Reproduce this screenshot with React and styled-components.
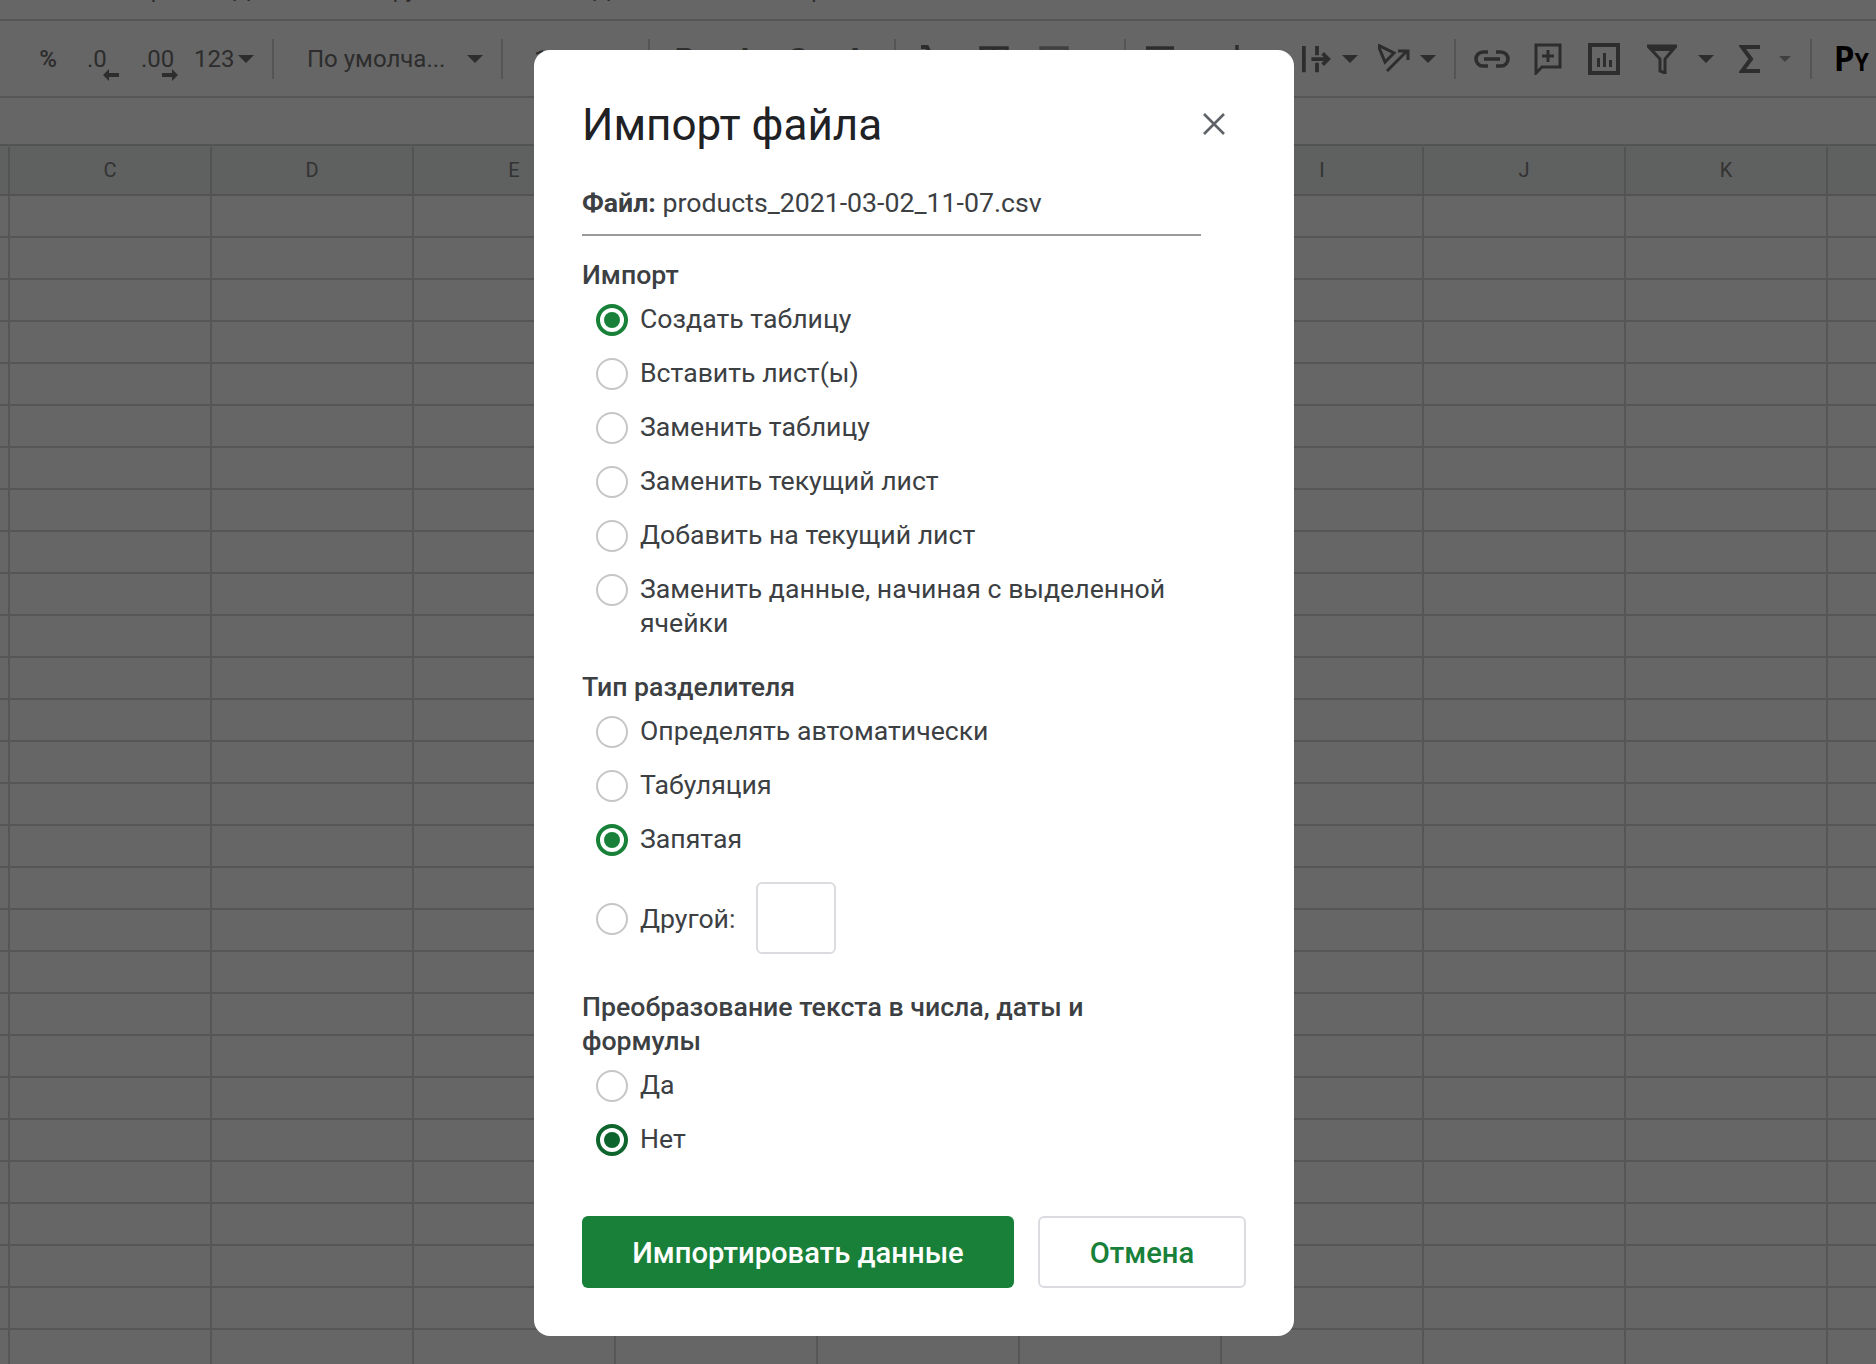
import React from 'react'
import styled, { createGlobalStyle } from 'styled-components'

const GlobalStyle = createGlobalStyle`
  html, body {
    margin: 0;
    padding: 0;
    width: 1876px;
    height: 1364px;
    overflow: hidden;
    background: #fff;
    font-family: Roboto, "Liberation Sans", sans-serif;
  }
`

const Page = styled.div`
  position: relative;
  width: 1876px;
  height: 1364px;
  overflow: hidden;
`

// menu row, only the descenders stick out at the top
const MenuBar = styled.div`
  display: flex;
  height: 19px;
  overflow: hidden;
  border-bottom: 2px solid #d8d8d8;
`

const MenuItem = styled.span`
  flex: none;
  width: ${p => p.$w}px;
  margin-top: -25px;
  height: 30px;
  line-height: 30px;
  font-size: 23px;
  color: #707070;
  white-space: nowrap;
`

const ToolBar = styled.div`
  display: flex;
  align-items: center;
  height: 75px;
  padding-left: 24px;
  border-bottom: 2px solid #d8d8d8;
  white-space: nowrap;
`

const Tool = styled.div`
  position: relative;
  flex: none;
  display: flex;
  align-items: center;
  justify-content: ${p => (p.$left ? 'flex-start' : 'center')};
  width: ${p => p.$w}px;
  height: 40px;
  padding-left: ${p => p.$pad || 0}px;
  box-sizing: border-box;
  font-size: ${p => p.$size || 24}px;
  font-weight: ${p => p.$weight || 400};
  color: #707070;
`

const Sep = styled.div`
  flex: none;
  width: 2px;
  height: 40px;
  background: #d4d4d4;
`

const Caret = styled.span`
  display: inline-block;
  flex: none;
  width: 0;
  height: 0;
  margin-left: ${p => p.$ml || 0}px;
  border-left: ${p => p.$s || 8}px solid transparent;
  border-right: ${p => p.$s || 8}px solid transparent;
  border-top: ${p => p.$s || 8}px solid ${p => (p.$dim ? '#a0a0a0' : '#707070')};
`

const NudgeArrow = styled.svg`
  position: absolute;
  top: 30px;
  left: ${p => p.$l}px;
`

const PyMark = styled.span`
  font-family: "DejaVu Sans Mono", monospace;
  font-weight: 700;
  font-size: 34px;
  color: #000;
  & > small {
    font-size: 24px;
  }
`

const FormulaBar = styled.div`
  height: 46px;
  border-bottom: 2px solid #d0d0d0;
`

const HeaderRow = styled.div`
  display: flex;
  height: 48px;
  background: #eef1f0;
  border-bottom: 2px solid #d0d0d0;
  align-items: flex-end;
`

const HeaderCell = styled.div`
  flex: none;
  width: ${p => p.$w}px;
  height: 47px;
  line-height: 46px;
  text-align: center;
  font-size: 20px;
  color: #808080;
  border-right: 2px solid #d0d0d0;
  box-sizing: border-box;
`

const Row = styled.div`
  display: flex;
  height: 40px;
  border-bottom: 2px solid #d8d8d8;
`

const Cell = styled.div`
  flex: none;
  width: ${p => p.$w}px;
  border-right: 2px solid #d8d8d8;
  box-sizing: border-box;
`

const Scrim = styled.div`
  position: absolute;
  inset: 0;
  display: flex;
  align-items: flex-start;
  padding: 50px 0 0 534px;
  background: rgba(0, 0, 0, 0.6);
`

const Dialog = styled.div`
  width: 760px;
  height: 1286px;
  padding: 0 48px 48px;
  box-sizing: border-box;
  background: #fff;
  border-radius: 16px;
  color: #3c4043;
`

const DialogHead = styled.div`
  display: flex;
  align-items: center;
  justify-content: space-between;
  height: 100px;
  padding-top: 50px;
  box-sizing: border-box;
`

const Title = styled.h1`
  margin: 0;
  font-size: 44px;
  line-height: 50px;
  font-weight: 400;
  color: #202124;
`

const CloseBtn = styled.button`
  display: flex;
  align-items: center;
  justify-content: center;
  width: 40px;
  height: 40px;
  margin: -2px 12px 0 0;
  padding: 0;
  border: 0;
  background: none;
  color: #5f6368;
`

const FileLine = styled.div`
  width: 619px;
  margin-top: 36px;
  padding-bottom: 14px;
  border-bottom: 2px solid #9a9a9a;
  font-size: 26.7px;
  line-height: 34px;
  & > b {
    font-weight: 700;
  }
`

const GroupLabel = styled.div`
  margin-top: ${p => p.$mt}px;
  margin-bottom: 1px;
  width: 570px;
  font-size: 26.7px;
  line-height: 34px;
  font-weight: 500;
`

const Option = styled.label`
  display: flex;
  align-items: flex-start;
  min-height: 54px;
  padding-left: 14px;
  font-size: 26.65px;
  line-height: 34px;
`

const Radio = styled.span`
  flex: none;
  display: flex;
  align-items: center;
  justify-content: center;
  width: 32px;
  height: 32px;
  margin-top: 11px;
  margin-right: 12px;
  box-sizing: border-box;
  border-radius: 50%;
  border: ${p => (p.$color ? `4px solid ${p.$color}` : '2px solid #c6c6c6')};
  &::after {
    content: '';
    display: ${p => (p.$color ? 'block' : 'none')};
    width: 16px;
    height: 16px;
    border-radius: 50%;
    background: ${p => p.$color};
  }
`

const OptionText = styled.span`
  width: 540px;
  padding-top: 9px;
  padding-bottom: 11px;
`

const OtherRow = styled.div`
  display: flex;
  align-items: center;
  height: 72px;
  margin-top: 15px;
  padding-left: 14px;
  font-size: 26.65px;
`

const OtherRadio = styled(Radio)`
  margin-top: 2px;
`

const OtherLabel = styled.span`
  margin-top: 2px;
`

const OtherInput = styled.div`
  width: 80px;
  height: 72px;
  margin-left: 21px;
  box-sizing: border-box;
  border: 2px solid #dadce0;
  border-radius: 6px;
`

const Actions = styled.div`
  display: flex;
  gap: 24px;
  margin-top: 49px;
`

const Button = styled.button`
  width: ${p => p.$w}px;
  height: 72px;
  padding: 2px 0 0;
  box-sizing: border-box;
  border-radius: 6px;
  border: ${p => (p.$primary ? '0' : '2px solid #dadce0')};
  background: ${p => (p.$primary ? '#188038' : '#fff')};
  color: ${p => (p.$primary ? '#fff' : '#188038')};
  font-family: Roboto, "Liberation Sans", sans-serif;
  font-size: 29.2px;
  font-weight: 500;
`

const GREEN = '#188038'
const DARK_GREEN = '#0d652d'
const INK = '#707070'

const importOptions = [
  ['Создать таблицу', GREEN],
  ['Вставить лист(ы)'],
  ['Заменить таблицу'],
  ['Заменить текущий лист'],
  ['Добавить на текущий лист'],
  ['Заменить данные, начиная с выделенной ячейки'],
]

const columns = ['C', 'D', 'E', 'F', 'G', 'H', 'I', 'J', 'K', '']
const rows = Array.from({ length: 28 }, (_, i) => i)

const Opt = ({ text, color }) => (
  <Option>
    <Radio $color={color} />
    <OptionText>{text}</OptionText>
  </Option>
)

const LeftArrow = () => (
  <NudgeArrow $l={31} width="16" height="12" viewBox="0 0 16 12">
    <path d="M0 6l6-6v4h10v4H6v4z" fill={INK} />
  </NudgeArrow>
)

const RightArrow = () => (
  <NudgeArrow $l={30} width="16" height="12" viewBox="0 0 16 12">
    <path d="M16 6l-6-6v4H0v4h10v4z" fill={INK} />
  </NudgeArrow>
)

const Icon = ({ w = 32, h = 32, vb = '0 0 32 32', children }) => (
  <svg width={w} height={h} viewBox={vb} fill="none">{children}</svg>
)

function Toolbar() {
  return (
    <ToolBar>
      <Tool $w={48} $weight={500}>%</Tool>
      <Tool $w={60} $left $pad={15}>.0<LeftArrow /></Tool>
      <Tool $w={56} $left $pad={9}>.00<RightArrow /></Tool>
      <Tool $w={78} $left $pad={6}>123<Caret $ml={4} /></Tool>
      <Tool $w={6} />
      <Sep />
      <Tool $w={227} $left $pad={33}>По умолча...<Caret $ml={22} /></Tool>
      <Sep />
      <Tool $w={145} $left $pad={31} $weight={500}>10</Tool>
      <Sep />
      <Tool $w={70} $size={32} $weight={700}>B</Tool>
      <Tool $w={50} $size={32} $weight={700}>I</Tool>
      <Tool $w={56} $size={32} $weight={700}>S</Tool>
      <Tool $w={58} $size={32} $weight={700}>A</Tool>
      <Tool $w={10} />
      <Sep />
      <Tool $w={70}>
        <Icon><path d="M6 4h6l12 26M14 14L6 30" stroke={INK} strokeWidth="4" /></Icon>
      </Tool>
      <Tool $w={56}>
        <Icon><path d="M3 5h26v24H3zM16 5v24M3 17h26" stroke={INK} strokeWidth="3.4" /></Icon>
      </Tool>
      <Tool $w={64}>
        <Icon><path d="M3 5h26v24H3z" stroke="#a0a0a0" strokeWidth="3.4" /></Icon>
      </Tool>
      <Tool $w={38} />
      <Sep />
      <Tool $w={68}>
        <Icon><path d="M2 5h28M2 13h18M2 21h28M2 29h18" stroke={INK} strokeWidth="3.4" /></Icon>
      </Tool>
      <Tool $w={86}>
        <Icon><path d="M16 2v20M8 14l8 8 8-8M3 28h26" stroke={INK} strokeWidth="3.4" /></Icon>
      </Tool>
      <Tool $w={52} $left $pad={22}>
        <Icon w={32} h={28} vb="0 0 32 28">
          <path d="M2 0v28M16 0v10M16 18v10M10 14h18M22 8l6 6-6 6" stroke={INK} strokeWidth="4" />
        </Icon>
      </Tool>
      <Tool $w={36}><Caret /></Tool>
      <Tool $w={50} $left $pad={10}>
        <Icon w={32} h={30} vb="0 0 32 30">
          <path d="M0 1l16 8-9 9zM9 27L29 7M20 7h10v9" stroke={INK} strokeWidth="3" />
        </Icon>
      </Tool>
      <Tool $w={20}><Caret /></Tool>
      <Tool $w={16} />
      <Sep />
      <Tool $w={72}>
        <Icon w={36} h={20} vb="0 0 36 20">
          <path d="M14 3H9a7 7 0 0 0 0 14h5M22 3h5a7 7 0 0 1 0 14h-5M10 10h16" stroke={INK} strokeWidth="3.6" />
        </Icon>
      </Tool>
      <Tool $w={39}>
        <Icon w={28} h={32} vb="0 0 28 32">
          <path d="M2 2h24v22H8l-6 6zM14 7v12M8 13h12" stroke={INK} strokeWidth="3" />
        </Icon>
      </Tool>
      <Tool $w={74}>
        <Icon>
          <path d="M2 2h28v28H2z" stroke={INK} strokeWidth="4" />
          <path d="M9 15h3v9H9zM15 10h3v14h-3zM21 17h3v7h-3z" fill={INK} />
        </Icon>
      </Tool>
      <Tool $w={41}>
        <Icon w={30} h={30} vb="0 0 30 30">
          <path d="M1 2h28l-11 13v14l-5-2V15z" stroke={INK} strokeWidth="3" />
          <path d="M1 1h28l-5 6H6z" fill={INK} />
        </Icon>
      </Tool>
      <Tool $w={48}><Caret /></Tool>
      <Tool $w={40}>
        <Icon w={22} h={30} vb="0 0 22 30">
          <path d="M21 3H3l9 12-9 12h18" stroke={INK} strokeWidth="4" />
        </Icon>
      </Tool>
      <Tool $w={30}><Caret $s={6} $dim /></Tool>
      <Tool $w={10} />
      <Sep />
      <Tool $w={64} $left $pad={22}><PyMark>P<small>Y</small></PyMark></Tool>
    </ToolBar>
  )
}

function Sheet() {
  return (
    <>
      <HeaderRow>
        <HeaderCell $w={10} />
        {columns.map(c => <HeaderCell key={c} $w={202}>{c}</HeaderCell>)}
      </HeaderRow>
      {rows.map(r => (
        <Row key={r}>
          <Cell $w={10} />
          {columns.map(c => <Cell key={c} $w={202} />)}
        </Row>
      ))}
    </>
  )
}

export default function App() {
  return (
    <Page>
      <GlobalStyle />
      <MenuBar>
        <MenuItem $w={120} />
        <MenuItem $w={113}>Формат</MenuItem>
        <MenuItem $w={107}>Данные</MenuItem>
        <MenuItem $w={253}>Инструменты</MenuItem>
        <MenuItem $w={190}>Дополнения</MenuItem>
        <MenuItem $w={100}>Справка</MenuItem>
      </MenuBar>
      <Toolbar />
      <FormulaBar />
      <Sheet />
      <Scrim>
        <Dialog>
          <DialogHead>
            <Title>Импорт файла</Title>
            <CloseBtn aria-label="Закрыть">
              <svg width="24" height="24" viewBox="0 0 24 24">
                <path d="M2 2l20 20M22 2L2 22" stroke="currentColor" strokeWidth="2.6" />
              </svg>
            </CloseBtn>
          </DialogHead>
          <FileLine><b>Файл:</b> products_2021-03-02_11-07.csv</FileLine>

          <GroupLabel $mt={22}>Импорт</GroupLabel>
          {importOptions.map(([text, color]) => <Opt key={text} text={text} color={color} />)}

          <GroupLabel $mt={19}>Тип разделителя</GroupLabel>
          <Opt text="Определять автоматически" />
          <Opt text="Табуляция" />
          <Opt text="Запятая" color={GREEN} />
          <OtherRow>
            <OtherRadio />
            <OtherLabel>Другой:</OtherLabel>
            <OtherInput />
          </OtherRow>

          <GroupLabel $mt={36}>Преобразование текста в числа, даты и формулы</GroupLabel>
          <Opt text="Да" />
          <Opt text="Нет" color={DARK_GREEN} />

          <Actions>
            <Button $primary $w={432}>Импортировать данные</Button>
            <Button $w={208}>Отмена</Button>
          </Actions>
        </Dialog>
      </Scrim>
    </Page>
  )
}
